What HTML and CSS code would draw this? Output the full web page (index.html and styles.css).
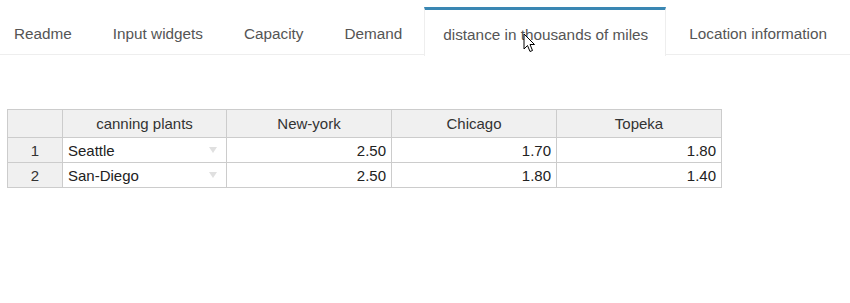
FILE: index.html
```html
<!DOCTYPE html>
<html lang="en">
<head>
    <meta charset="UTF-8">
    <meta name="viewport" content="width=device-width, initial-scale=1.0">
    <title>Transport model</title>
    <link rel="stylesheet" href="styles.css">
</head>
<body>
    <nav class="tabs">
        <a class="tab">Readme</a>
        <a class="tab">Input widgets</a>
        <a class="tab">Capacity</a>
        <a class="tab">Demand</a>
        <a class="tab active">distance in thousands of miles
            <svg class="pointer" width="14" height="20" viewBox="0 0 14 20">
                <path d="M1 1 L1 16 L4.5 12.5 L7 18.5 L9.5 17.5 L7 11.5 L11.5 11.5 Z" fill="#fff" stroke="#000" stroke-width="1" stroke-linejoin="round"/>
            </svg>
        </a>
        <a class="tab">Location information</a>
    </nav>

    <div class="sheet">
        <table class="grid">
            <colgroup>
                <col class="col-index">
                <col class="col-name">
                <col class="col-wide">
                <col class="col-wide">
                <col class="col-wide">
            </colgroup>
            <thead>
                <tr>
                    <th></th>
                    <th>canning plants</th>
                    <th>New-york</th>
                    <th>Chicago</th>
                    <th>Topeka</th>
                </tr>
            </thead>
            <tbody>
                <tr>
                    <th>1</th>
                    <td class="dropdown">Seattle<span class="arrow"></span></td>
                    <td class="num">2.50</td>
                    <td class="num">1.70</td>
                    <td class="num">1.80</td>
                </tr>
                <tr>
                    <th>2</th>
                    <td class="dropdown">San-Diego<span class="arrow"></span></td>
                    <td class="num">2.50</td>
                    <td class="num">1.80</td>
                    <td class="num">1.40</td>
                </tr>
            </tbody>
        </table>
    </div>
</body>
</html>
```

FILE: styles.css
```css
* {
    margin: 0;
    padding: 0;
    box-sizing: border-box;
    font-family: 'Liberation Sans', Arial, sans-serif;
}

body {
    background: #fff;
    color: #333;
    font-size: 15px;
}

.tabs {
    display: flex;
    padding-top: 7px;
    margin-left: -5px;
    border-bottom: 1px solid #eee;
    height: 55px;
}

.tab {
    position: relative;
    display: flex;
    align-items: center;
    height: 48px;
    padding: 4px 17px 0 18px;
    margin-right: 4px;
    border: 1px solid transparent;
    border-top-width: 3px;
    color: #555;
    font-size: 15.3px;
    white-space: nowrap;
}

.tab.active {
    height: 49px;
    background: #fff;
    border-color: #eee;
    border-top-color: #3a87b3;
    border-bottom: none;
}

/* mouse pointer resting over the active tab */
.pointer {
    position: absolute;
    left: 98px;
    top: 23px;
}

.sheet {
    padding: 54px 0 0 7px;
}

.grid {
    border-collapse: collapse;
    table-layout: fixed;
    width: 713px;
}

.col-index {
    width: 55px;
}

.col-name {
    width: 164px;
}

.col-wide {
    width: 165px;
}

.grid th,
.grid td {
    border: 1px solid #ccc;
    height: 25px;
    padding: 0 5px;
    font-weight: normal;
    white-space: nowrap;
}

.grid thead th {
    height: 28px;
    background: #f0f0f0;
    color: #333;
    text-align: center;
}

.grid tbody th {
    background: #f0f0f0;
    color: #333;
    text-align: center;
}

.grid td {
    color: #222;
}

.dropdown {
    position: relative;
}

.arrow {
    position: absolute;
    right: 9px;
    top: 9px;
    width: 0;
    height: 0;
    border-left: 4px solid transparent;
    border-right: 4px solid transparent;
    border-top: 6px solid #e0e0e0;
}

.num {
    text-align: right;
}
```
